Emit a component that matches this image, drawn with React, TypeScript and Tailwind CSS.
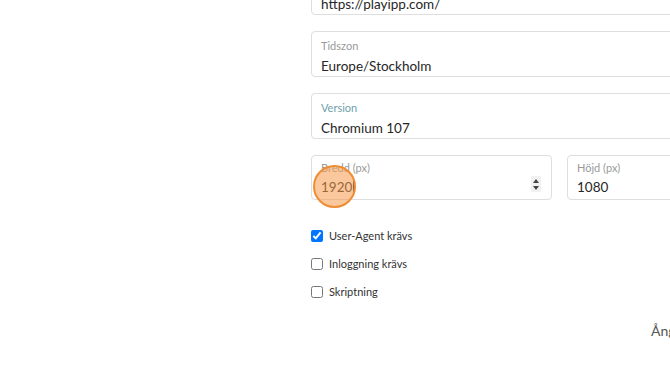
import React from 'react';

const font = { fontFamily: 'Lato, "Open Sans", sans-serif' };

// 텍스트 필드 (라벨 + 값)
const Field: React.FC<{ label: string; value: string; labelClass?: string }> = ({
  label,
  value,
  labelClass = 'text-[#9a9a9a]',
}) => (
  <div className="box-border h-[46px] rounded-[4px] border border-[#dedede] bg-white pl-[9px] pt-[7px]">
    <div className={`text-[11px] leading-[14px] ${labelClass}`}>{label}</div>
    <div className="mt-[3px] text-[13.5px] leading-[20px] text-[#262626]">{value}</div>
  </div>
);

const Check: React.FC<{ label: string; checked?: boolean }> = ({ label, checked }) => (
  <label className="flex h-[28px] items-center">
    <input type="checkbox" checked={!!checked} readOnly className="m-0 h-[12px] w-[12px]" />
    <span className="ml-[6px] text-[11px] text-[#333333]">{label}</span>
  </label>
);

export default function App() {
  return (
    <div className="relative h-[373px] w-[670px] overflow-hidden bg-white" style={font}>
      <div className="ml-[311px] mt-[-31px] flex w-[497px] flex-col gap-[16px]">
        <Field label="URL" value="https://playipp.com/" />
        <Field label="Tidszon" value="Europe/Stockholm" />
        <Field label="Version" value="Chromium 107" labelClass="text-[#6c9fab]" />

        <div className="grid grid-cols-2 gap-[15px]">
          {/* Bredd */}
          <div className="relative box-border h-[45px] rounded-[4px] border border-[#dedede] bg-white pl-[9px] pt-[5px]">
            <div className="text-[11px] leading-[14px] text-[#9a9a9a]">Bredd (px)</div>
            <div className="mt-[2px] flex items-center text-[13.5px] leading-[20px] text-[#262626]">
              1920
              <span className="ml-[1px] inline-block h-[16px] w-[1px] bg-[#222222]" />
            </div>
            <div className="absolute right-[10px] top-[20px] flex h-[16px] w-[10px] flex-col items-center justify-center gap-[3px] bg-[#f1f1f1]">
              <svg width="6" height="4" viewBox="0 0 6 4">
                <path d="M3 0 L6 4 L0 4 Z" fill="#444" />
              </svg>
              <svg width="6" height="4" viewBox="0 0 6 4">
                <path d="M0 0 L6 0 L3 4 Z" fill="#444" />
              </svg>
            </div>
          </div>
          {/* Höjd */}
          <div className="box-border h-[45px] rounded-[4px] border border-[#dedede] bg-white pl-[9px] pt-[5px]">
            <div className="text-[11px] leading-[14px] text-[#9a9a9a]">Höjd (px)</div>
            <div className="mt-[2px] text-[13.5px] leading-[20px] text-[#262626]">1080</div>
          </div>
        </div>

        <div className="mt-[6px] flex flex-col">
          <Check label="User-Agent krävs" checked />
          <Check label="Inloggning krävs" />
          <Check label="Skriptning" />
        </div>

        <div className="mt-[-2px] pl-[340px] text-[14px] text-[#555555]">Ångra</div>
      </div>

      {/* 클릭 표시 */}
      <div className="absolute left-[313px] top-[165px] h-[43px] w-[43px] rounded-full border-2 border-[#ef8d35] bg-[#f59a4a]/55" />
    </div>
  );
}
